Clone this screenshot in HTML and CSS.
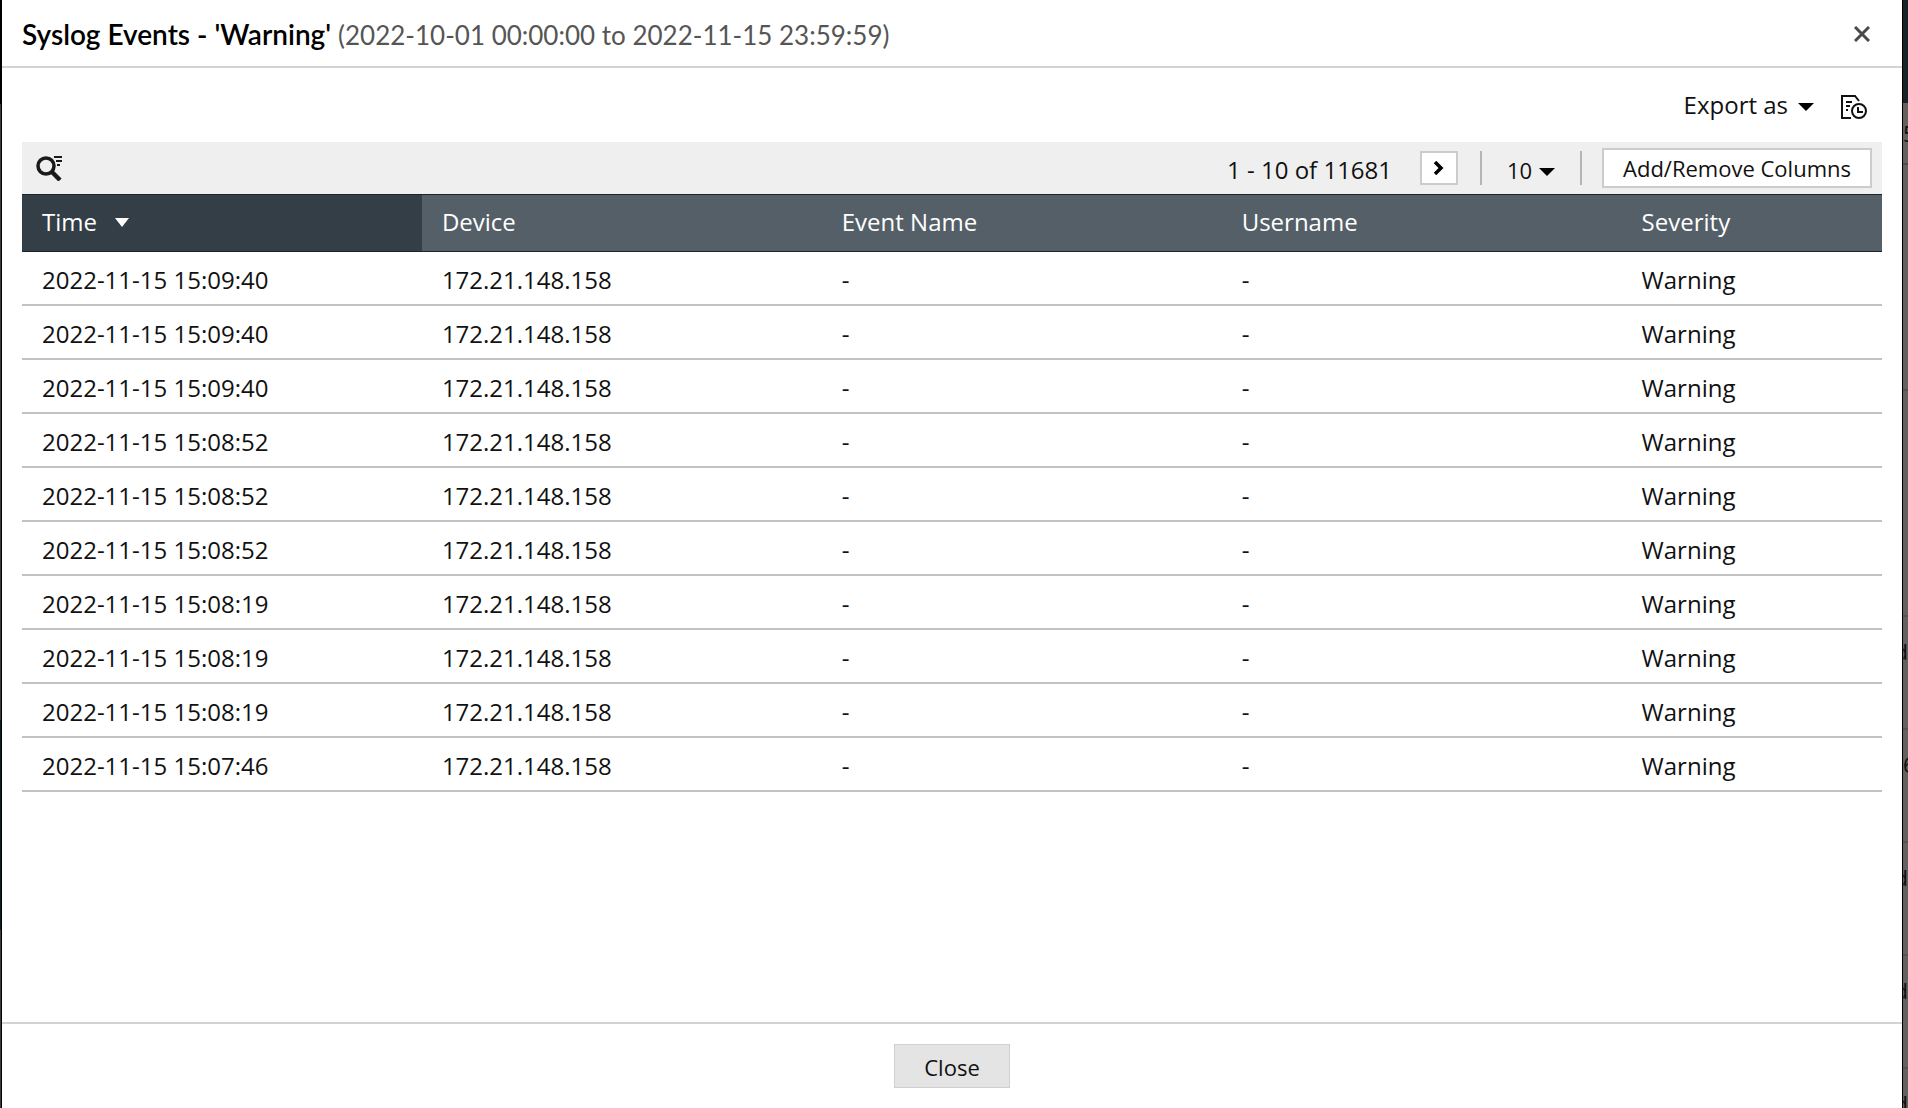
FILE: index.html
```html
<!DOCTYPE html>
<html lang="en">
<head>
    <meta charset="UTF-8">
    <meta name="viewport" content="width=device-width, initial-scale=1.0">
    <title>Syslog Events</title>
    <link rel="stylesheet" href="styles.css">
</head>
<body>

    <!-- dimmed page, left edge -->
    <div class="page-left"></div>

    <div class="dialog" role="dialog" aria-labelledby="dialog-title">
        <div class="dialog-header">
            <h1 id="dialog-title">Syslog Events - 'Warning' <span class="range">(2022-10-01 00:00:00 to 2022-11-15 23:59:59)</span></h1>
            <button class="icon-btn" aria-label="Close dialog">
                <svg width="16" height="16" viewBox="0 0 16 16"><path d="M1 1l14 14M15 1L1 15" fill="none" stroke="#4a4a4a" stroke-width="3"/></svg>
            </button>
        </div>

        <div class="dialog-body">
            <div class="actions">
                <button class="export-btn">Export as
                    <svg class="caret" width="16" height="8" viewBox="0 0 16 8"><path d="M0 0h16L8 8z"/></svg>
                </button>
                <button class="icon-btn history-btn" aria-label="Export history">
                    <svg width="28" height="26" viewBox="0 0 28 26" fill="none" stroke="#111" stroke-width="2">
                        <path d="M11 24H2V2h13l4 5"/>
                        <path d="M6 8h6M6 12h4M6 16h2"/>
                        <circle cx="19" cy="17" r="7"/>
                        <path d="M18 13v5h5"/>
                    </svg>
                </button>
            </div>

            <div class="toolbar">
                <button class="icon-btn" aria-label="Search">
                    <svg width="28" height="26" viewBox="0 0 28 26" fill="none" stroke="#1a1a1a">
                        <circle cx="10" cy="11" r="8" stroke-width="3.5"/>
                        <path d="M16 17l8 8" stroke-width="4.5"/>
                        <path d="M18 2h8M20 6h6M21 10h3" stroke-width="2"/>
                    </svg>
                </button>
                <div class="paging">
                    <span class="count">1 - 10 of 11681</span>
                    <button class="next-btn" aria-label="Next page">
                        <svg width="12" height="14" viewBox="0 0 12 14"><path d="M2 1l6 6-6 6" fill="none" stroke="#000" stroke-width="3.5"/></svg>
                    </button>
                    <div class="page-size">
                        <select aria-label="Rows per page">
                            <option>10</option>
                            <option>20</option>
                            <option>50</option>
                        </select>
                        <svg class="caret" width="16" height="8" viewBox="0 0 16 8"><path d="M0 0h16L8 8z"/></svg>
                    </div>
                    <button class="columns-btn">Add/Remove Columns</button>
                </div>
            </div>

            <table>
                <thead>
                    <tr>
                        <th class="sorted" aria-sort="descending">Time <svg width="14" height="9" viewBox="0 0 14 9"><path d="M0 0h14L7 9z" fill="#fff"/></svg></th>
                        <th>Device</th>
                        <th>Event Name</th>
                        <th>Username</th>
                        <th class="severity">Severity</th>
                    </tr>
                </thead>
                <tbody>
                    <tr><td>2022-11-15 15:09:40</td><td>172.21.148.158</td><td>-</td><td>-</td><td>Warning</td></tr>
                    <tr><td>2022-11-15 15:09:40</td><td>172.21.148.158</td><td>-</td><td>-</td><td>Warning</td></tr>
                    <tr><td>2022-11-15 15:09:40</td><td>172.21.148.158</td><td>-</td><td>-</td><td>Warning</td></tr>
                    <tr><td>2022-11-15 15:08:52</td><td>172.21.148.158</td><td>-</td><td>-</td><td>Warning</td></tr>
                    <tr><td>2022-11-15 15:08:52</td><td>172.21.148.158</td><td>-</td><td>-</td><td>Warning</td></tr>
                    <tr><td>2022-11-15 15:08:52</td><td>172.21.148.158</td><td>-</td><td>-</td><td>Warning</td></tr>
                    <tr><td>2022-11-15 15:08:19</td><td>172.21.148.158</td><td>-</td><td>-</td><td>Warning</td></tr>
                    <tr><td>2022-11-15 15:08:19</td><td>172.21.148.158</td><td>-</td><td>-</td><td>Warning</td></tr>
                    <tr><td>2022-11-15 15:08:19</td><td>172.21.148.158</td><td>-</td><td>-</td><td>Warning</td></tr>
                    <tr><td>2022-11-15 15:07:46</td><td>172.21.148.158</td><td>-</td><td>-</td><td>Warning</td></tr>
                </tbody>
            </table>
        </div>

        <div class="dialog-footer">
            <button class="close-btn">Close</button>
        </div>
    </div>

    <!-- dimmed page, right edge -->
    <div class="page-right" aria-hidden="true">
        <div class="page-top"></div>
        <div class="page-tabs">5</div>
        <div class="page-gap"></div>
        <div class="page-gap"></div>
        <div class="page-row word">d</div>
        <div class="page-row">6</div>
        <div class="page-row word">d</div>
        <div class="page-row word">d</div>
        <div class="page-row word">d</div>
    </div>

</body>
</html>
```
FILE: styles.css
```css
* {
    box-sizing: border-box;
}

body {
    margin: 0;
    display: flex;
    height: 100vh;
    overflow: hidden;
    font-family: 'Open Sans', sans-serif;
    font-size: 24px;
    line-height: 32px;
    color: #111;
    background: #fff;
}

button, select {
    font: inherit;
    color: inherit;
    margin: 0;
    padding: 0;
    border: none;
    border-radius: 0;
    background: none;
    cursor: pointer;
}

svg {
    display: block;
}

.icon-btn {
    display: flex;
}

.caret {
    margin-top: 4px;
}

/* Dialog */
.dialog {
    flex: 1;
    min-width: 0;
    display: flex;
    flex-direction: column;
    background: #fff;
}

.dialog-header {
    display: flex;
    align-items: center;
    justify-content: space-between;
    height: 68px;
    padding: 2px 32px 0 20px;
    border-bottom: 2px solid #d2d2d2;
}

h1 {
    margin: 0;
    font-family: 'Lato', sans-serif;
    font-size: 28px;
    font-weight: 600;
    color: #000;
}

.range {
    font-size: 26px;
    font-weight: 400;
    color: #555;
}

.dialog-body {
    flex: 1;
    padding: 0 20px;
}

.actions {
    display: flex;
    align-items: center;
    justify-content: flex-end;
    gap: 26px;
    height: 74px;
    padding-right: 14px;
}

.export-btn {
    display: flex;
    align-items: center;
    gap: 10px;
}

.history-btn {
    padding-top: 4px;
}

/* Toolbar */
.toolbar {
    display: flex;
    align-items: center;
    justify-content: space-between;
    height: 52px;
    padding: 0 10px 0 14px;
    background: #efefef;
}

.paging {
    display: flex;
    align-items: center;
}

.count {
    padding-top: 4px;
}

.next-btn {
    display: flex;
    align-items: center;
    justify-content: center;
    width: 38px;
    height: 34px;
    margin: 0 22px 0 28px;
    border: 2px solid #ccc;
    background: #fff;
}

.page-size {
    display: flex;
    align-items: center;
    gap: 6px;
    height: 34px;
    margin-right: 20px;
    padding: 4px 25px 0;
    border-left: 2px solid #b5b5b5;
    border-right: 2px solid #b5b5b5;
}

.page-size select {
    appearance: none;
    font-size: 22px;
}

.columns-btn {
    height: 40px;
    padding: 0 19px;
    font-size: 22px;
    border: 2px solid #ccc;
    background: #fff;
}

/* Events table */
table {
    width: 100%;
    table-layout: fixed;
    border-collapse: separate;
    border-spacing: 0;
}

th {
    height: 58px;
    padding: 0 20px 2px;
    text-align: left;
    font-weight: 400;
    color: #fff;
    background: #555f68;
    border-top: 1px solid #1b242b;
    border-bottom: 1px solid #1b242b;
}

th svg {
    display: inline-block;
    margin-left: 12px;
    vertical-align: 4px;
}

.sorted {
    background: #333e46;
}

.severity {
    width: 14%;
}

td {
    height: 54px;
    padding: 4px 20px 0;
    border-bottom: 2px solid #c2c2c2;
}

/* Footer */
.dialog-footer {
    display: flex;
    justify-content: center;
    height: 86px;
    padding-top: 20px;
    border-top: 2px solid #d2d2d2;
}

.close-btn {
    width: 116px;
    height: 44px;
    padding-top: 2px;
    font-size: 22px;
    border: 1px solid #d0d0d0;
    background: #e4e4e4;
}

/* Page behind the dialog */
.page-left {
    width: 2px;
    background: linear-gradient(#000 104px, #3c3c3c 104px, #3c3c3c 720px, #0c1b28 720px, #0c1b28 930px, #3c3c3c 930px);
    border-right: 1px solid #000;
}

.page-right {
    width: 6px;
    overflow: hidden;
    border-left: 1px solid #000;
    background: #64615e;
    font-size: 22px;
    color: #111;
}

.page-top {
    height: 103px;
    background: #192226;
}

.page-tabs {
    height: 62px;
    padding-top: 14px;
    border-bottom: 2px solid #4f4d4b;
}

.page-gap {
    height: 226px;
    border-bottom: 2px solid #565452;
}

.page-row {
    height: 113px;
    padding-top: 18px;
    border-bottom: 2px solid #565452;
}

/* only the last letter shows past the dialog */
.word {
    display: flex;
    justify-content: flex-end;
}
```
